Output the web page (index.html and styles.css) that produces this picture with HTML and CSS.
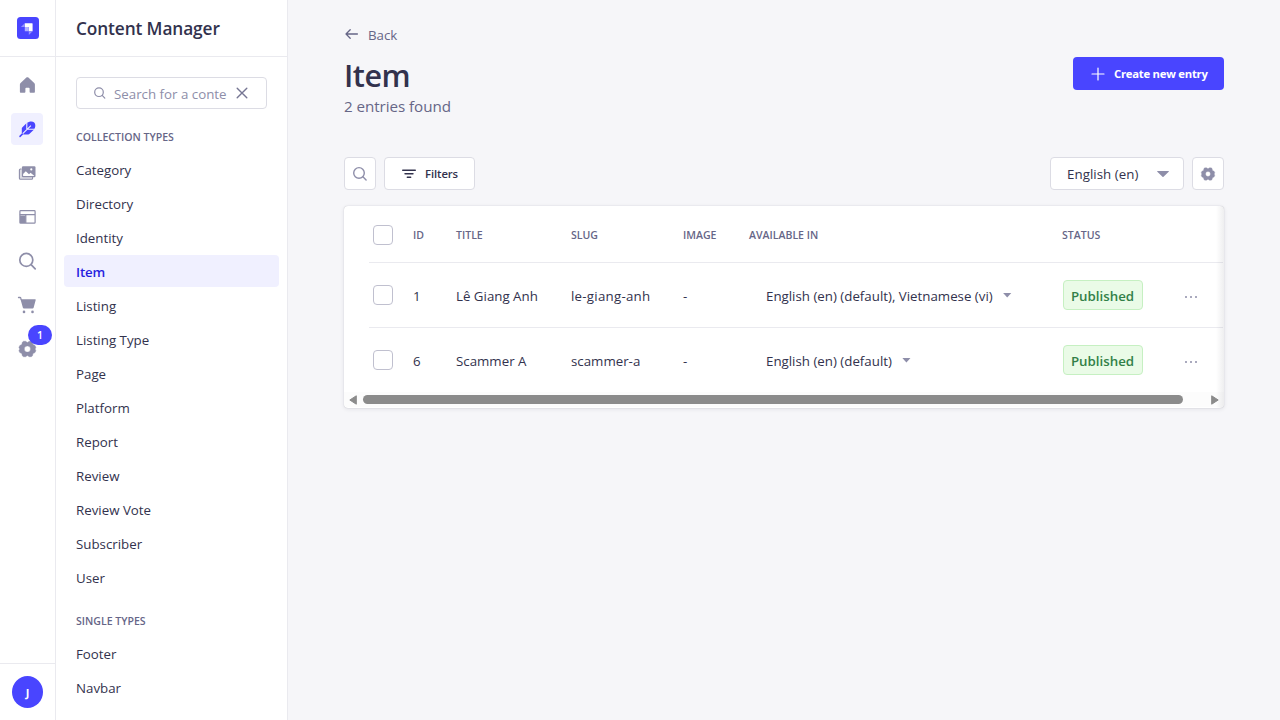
FILE: index.html
```html
<!DOCTYPE html>
<html lang="en">
<head>
<meta charset="utf-8">
<title>Content Manager</title>
<link rel="stylesheet" href="styles.css">
</head>
<body>
<div class="app">
  <nav class="rail">
    <div class="rail-logo">
      <svg width="22" height="22" viewBox="0 0 22 22"><rect width="22" height="22" rx="3.500" fill="#4945ff"/><path d="M7.800 6.200h7.300a.5.500 0 0 1 .5.500v7.600h-3.800v-3.800a.4.400 0 0 0-.4-.400H7.800z" fill="#fff"/><path d="M7.800 6.200v3.900H4.300c-.3 0-.4-.2-.2-.4zM11.800 14.300h3.800l-3.500 3.500c-.1.100-.3 0-.3-.2z" fill="#9593ff"/><path d="M7.800 10.100h3.600a.4.400 0 0 1 .4.400v3.800H8.200a.4.400 0 0 1-.4-.4z" fill="#b3b1ff"/></svg>
    </div>
    <div class="rail-links">
      <a class="rail-link"><svg width="20" height="20" viewBox="0 0 20 20"><path d="M10.400 2.200c.4 0 .7.100 1 .4l5.800 5.300c.5.400.7.900.7 1.500v7.300c0 .6-.4 1-1 1h-3.500c-.5 0-.8-.4-.8-.9v-3.300c0-.5-.3-.8-.8-.8H9.200c-.5 0-.8.300-.8.800v3.300c0 .5-.3.900-.8.900H3.900c-.6 0-1-.4-1-1V9.400c0-.6.200-1.100.7-1.500l5.800-5.300c.3-.3.600-.4 1-.4z" fill="#8e8ea9"/></svg></a>
      <a class="rail-link active"><svg width="20" height="20" viewBox="0 0 20 20"><path d="M4.800 14V9.400c0-.4.100-.6.400-.9l4.500-4.400c2.500-2.100 5.900-2.200 7.500-.7 1.700 1.800 1.500 5-.4 7.300l-4.500 4.300c-.3.300-.5.400-.9.400H6.600z" fill="#4945ff"/><path d="M3 17.400l3-3" stroke="#4945ff" stroke-width="1.500" stroke-linecap="round"/><path d="M5.700 14.700l8.200-8M9.800 3.500v6.500M10.300 10.200h7.500" fill="none" stroke="#f0f0ff" stroke-width="1.100"/></svg></a>
      <a class="rail-link"><svg width="20" height="20" viewBox="0 0 20 20"><path d="M4.600 6H3.400c-.6 0-1 .4-1 1v8.300c0 .6.400 1 1 1h11.200c.6 0 1-.4 1-1v-1.200" fill="#dcdce4" stroke="#8e8ea9" stroke-width="1.100"/><rect x="4.900" y="3.200" width="13.600" height="11" rx="1.200" fill="#8e8ea9"/><path d="M6.100 12.900V11l2.700-2.800 3.200 3 1.500-1.400 3.700 2.900v.2z" fill="#fff"/><circle cx="14.300" cy="6.400" r="1.100" fill="#fff"/></svg></a>
      <a class="rail-link"><svg width="20" height="20" viewBox="0 0 20 20"><rect x="2.900" y="3.600" width="15.200" height="12.600" rx=".8" fill="#fff" stroke="#8e8ea9" stroke-width="1.200"/><path d="M2.800 7.600h15.200M8.800 7.600v8.500" stroke="#8e8ea9" stroke-width="1.200"/><path d="M3 8.500h5.600V16H3z" fill="#8e8ea9"/></svg></a>
      <a class="rail-link"><svg width="20" height="20" viewBox="0 0 20 20" fill="none" stroke="#8e8ea9" stroke-width="1.700" stroke-linecap="round"><circle cx="9.300" cy="8.900" r="6.500"/><path d="M14.100 13.700l4.100 4.100"/></svg></a>
      <a class="rail-link"><svg width="20" height="20" viewBox="0 0 20 20"><path d="M1.500 2.500h1.400c.5 0 .8.200.9.700l.4 1.300" fill="none" stroke="#8e8ea9" stroke-width="1.300" stroke-linecap="round"/><path d="M3.500 4.200h14.700c.4 0 .6.300.5.700l-2.100 7.900c-.1.500-.5.800-1 .8H6.900c-.5 0-.9-.3-1-.8z" fill="#8e8ea9"/><circle cx="7" cy="16.900" r="1.300" fill="#8e8ea9"/><circle cx="15.500" cy="16.900" r="1.300" fill="#8e8ea9"/></svg></a>
      <a class="rail-link"><svg width="20" height="20" viewBox="-.4 0 20 20"><path fill-rule="evenodd" d="M6.100 2.300h2.100L10 3.500l1.800-1.200h2.100l1.200.9.500 2.300 2 1 .9 1.900-.8 1.600.8 1.700-.9 1.900-2 1-.5 2.200-1.200.9h-2.100L10 16.500l-1.800 1.200H6.100l-1.200-.9-.5-2.200-2-1-.9-1.900.8-1.700-.8-1.600.9-1.900 2-1 .5-2.300zM10 6.900a3.100 3.100 0 1 0 0 6.200 3.100 3.100 0 0 0 0-6.200z" fill="#8e8ea9" stroke="#8e8ea9" stroke-width=".4" stroke-linejoin="round"/></svg><span class="badge">1</span></a>
    </div>
    <div class="rail-user"><span class="avatar">J</span></div>
  </nav>

  <aside class="side">
    <header class="side-head">Content Manager</header>
    <div class="side-body">
      <div class="search">
        <svg width="14" height="14" viewBox="0 0 14 14" fill="none" stroke="#8e8ea9" stroke-width="1.200" stroke-linecap="round"><circle cx="6" cy="6.200" r="4.300"/><path d="M9.200 9.400l2.600 2.700"/></svg>
        <span class="search-text">Search for a conte</span>
        <svg width="12" height="12" viewBox="0 0 12 12" fill="none" stroke="#767693" stroke-width="1.400" stroke-linecap="round"><path d="M1.200 1.200l9.600 9.600M10.800 1.200l-9.600 9.600"/></svg>
      </div>
      <h2 class="group">COLLECTION TYPES</h2>
      <ul class="links">
        <li>Category</li><li>Directory</li><li>Identity</li><li class="current">Item</li><li>Listing</li><li>Listing Type</li><li>Page</li><li>Platform</li><li>Report</li><li>Review</li><li>Review Vote</li><li>Subscriber</li><li>User</li>
      </ul>
      <h2 class="group group-next">SINGLE TYPES</h2>
      <ul class="links"><li>Footer</li><li>Navbar</li></ul>
    </div>
  </aside>

  <main class="main">
    <a class="back"><svg width="16" height="16" viewBox="0 0 16 16" fill="none" stroke="#666687" stroke-width="1.300" stroke-linecap="round" stroke-linejoin="round"><path d="M13.400 8H2M6.200 3.800L2 8l4.200 4.200"/></svg><span>Back</span></a>
    <div class="title-row">
      <div><h1 class="title">Item</h1><p class="subtitle">2 entries found</p></div>
      <button class="create"><svg width="14" height="14" viewBox="0 0 14 14" stroke="#fff" stroke-width="1.200" stroke-linecap="round"><path d="M7 1v12M1 7h12"/></svg><span>Create new entry</span></button>
    </div>
    <div class="tools">
      <button class="box square"><svg width="16" height="16" viewBox="0 0 16 16" fill="none" stroke="#8e8ea9" stroke-width="1.400" stroke-linecap="round"><circle cx="7" cy="6.900" r="5.300"/><path d="M10.900 10.800l3.200 3.200"/></svg></button>
      <button class="box filters"><svg width="16" height="16" viewBox="0 0 16 16" stroke="#32324d" stroke-width="1.400" stroke-linecap="round"><path d="M1.700 4.300h12.600M4 7.800h8M6.300 11.200h3.400"/></svg><span>Filters</span></button>
      <div class="box locale"><span>English (en)</span><svg width="12" height="6" viewBox="0 0 12 6"><path d="M.5 0h11c.4 0 .5.400.2.700L6.500 5.700c-.3.300-.7.300-1 0L.3.700C0 .4.100 0 .5 0z" fill="#8e8ea9"/></svg></div>
      <button class="box square"><svg width="16" height="16" viewBox="0 0 20 20"><path fill-rule="evenodd" d="M6.100 2.300h2.100L10 3.500l1.800-1.200h2.100l1.200.9.500 2.300 2 1 .9 1.900-.8 1.600.8 1.700-.9 1.900-2 1-.5 2.200-1.200.9h-2.100L10 16.500l-1.800 1.200H6.100l-1.200-.9-.5-2.200-2-1-.9-1.900.8-1.700-.8-1.600.9-1.900 2-1 .5-2.300zM10 6.900a3.100 3.100 0 1 0 0 6.200 3.100 3.100 0 0 0 0-6.200z" fill="#8e8ea9" stroke="#8e8ea9" stroke-width=".4" stroke-linejoin="round"/></svg></button>
    </div>
    <section class="table">
      <div class="row head"><span class="check"></span><span>ID</span><span>TITLE</span><span>SLUG</span><span>IMAGE</span><span>AVAILABLE IN</span><span>STATUS</span><span></span></div>
      <div class="row"><span class="check"></span><span>1</span><span>Lê Giang Anh</span><span class="slug">le-giang-anh</span><span>-</span><span class="locales"><span>English (en) (default), Vietnamese (vi)</span><i class="caret"></i></span><span class="status">Published</span><span class="dots"><i></i><i></i><i></i></span></div>
      <div class="row"><span class="check"></span><span>6</span><span>Scammer A</span><span>scammer-a</span><span>-</span><span class="locales"><span>English (en) (default)</span><i class="caret"></i></span><span class="status">Published</span><span class="dots"><i></i><i></i><i></i></span></div>
      <div class="scroll">
        <svg width="8" height="10" viewBox="0 0 8 10"><path d="M7.300.8v8.400L.8 5z" fill="#8b8b8b" stroke="#8b8b8b" stroke-linejoin="round"/></svg>
        <span class="thumb"></span>
        <svg width="8" height="10" viewBox="0 0 8 10"><path d="M.7.8v8.400L7.200 5z" fill="#8b8b8b" stroke="#8b8b8b" stroke-linejoin="round"/></svg>
      </div>
    </section>
  </main>
</div>
</body>
</html>
```
FILE: styles.css
```css
* { box-sizing: border-box; }
body { margin: 0; font-family: "Open Sans", "Noto Sans", sans-serif; font-size: 13.3px; color: #32324d; }
h1, h2, p, ul { margin: 0; padding: 0; }
ul { list-style: none; }
button { font: inherit; color: inherit; margin: 0; padding: 0; }
svg { display: block; flex: none; }
.app { display: flex; width: 1280px; height: 720px; overflow: hidden; background: #f6f6f9; white-space: nowrap; }

.rail { width: 56px; flex: none; background: #fff; border-right: 1px solid #eaeaef; display: flex; flex-direction: column; }
.rail-logo { height: 57px; padding: 17px 0 0 17px; border-bottom: 1px solid #eaeaef; }
.rail-links { flex: 1; display: flex; flex-direction: column; gap: 12px; padding: 12px 0 12px 11px; }
.rail-link { position: relative; width: 32px; height: 32px; border-radius: 4px; display: flex; align-items: center; justify-content: center; }
.rail-link.active { background: #f0f0ff; }
.badge { position: absolute; left: 17px; top: -8px; width: 24px; height: 20px; border-radius: 10px; background: #4945ff; color: #fff; font-size: 10.5px; font-weight: 600; line-height: 21px; text-align: center; }
.rail-user { height: 57px; border-top: 1px solid #eaeaef; padding: 12px; }
.avatar { display: block; width: 31px; height: 32px; border-radius: 50%; background: #4945ff; color: #fff; font-size: 11px; font-weight: 700; line-height: 33px; text-align: center; }

.side { width: 232px; flex: none; background: #fff; border-right: 1px solid #eaeaef; }
.side-head { height: 57px; border-bottom: 1px solid #eaeaef; padding-left: 20px; font-size: 17.3px; letter-spacing: -.12px; font-weight: 600; line-height: 57px; }
.side-body { padding: 20px 8px 0; }
.search { width: 191px; height: 32px; margin-left: 12px; padding: 0 18px 0 16px; border: 1px solid #dcdce4; border-radius: 4px; display: flex; align-items: center; }
.search-text { flex: 1; margin-left: 7px; color: #8e8ea9; line-height: 32px; padding-top: 2px; }
.group { margin: 18px 0 6px 12px; font-size: 10.55px; font-weight: 600; line-height: 20px; color: #666687; }
.group-next { margin-top: 18px; }
.links { display: flex; flex-direction: column; gap: 2px; }
.links li { height: 32px; padding-left: 12px; border-radius: 4px; line-height: 34px; }
.links .current { background: #f0f0ff; color: #271fe0; font-weight: 600; letter-spacing: -.15px; }

.main { flex: 1; padding: 24px 56px 0; }
.back { display: flex; align-items: center; gap: 8px; height: 20px; color: #666687; }
.back span { padding-top: 2px; }
.title-row { display: flex; justify-content: space-between; height: 113px; padding-top: 13px; }
.title { font-size: 30.5px; letter-spacing: -.45px; font-weight: 600; line-height: 36px; padding-bottom: 2px; }
.subtitle { font-size: 15.2px; letter-spacing: -.06px; line-height: 22px; color: #666687; }
.create { width: 151px; height: 33px; border: 0; border-radius: 4px; background: #4945ff; color: #fff; font-size: 11.3px; letter-spacing: -.25px; font-weight: 700; display: flex; align-items: center; padding-left: 18px; gap: 9px; }
.tools { display: flex; gap: 8px; height: 33px; }
.box { height: 33px; border: 1px solid #dcdce4; border-radius: 4px; background: #fff; display: flex; align-items: center; }
.square { width: 32px; justify-content: center; }
.filters { width: 91px; padding-left: 16px; gap: 8px; font-size: 11.3px; letter-spacing: -.1px; font-weight: 600; }
.locale { width: 134px; margin-left: auto; padding: 0 14px 0 16px; justify-content: space-between; letter-spacing: .05px; }

.table { position: relative; margin-top: 16px; height: 202px; padding-left: 25px; background: #fff; border-radius: 4px; box-shadow: 0 1px 4px rgba(33, 33, 52, .1), 0 0 1px rgba(33, 33, 52, .25); }
.table::after { content: ""; position: absolute; right: 0; top: 0; width: 8px; height: 100%; border-radius: 0 4px 4px 0; background: linear-gradient(to left, rgba(33, 33, 52, .075), rgba(33, 33, 52, 0)); }
.row { height: 65px; display: grid; grid-template-columns: 44px 43px 115px 112px 66px 313px 121px 1fr; align-items: center; border-bottom: 1px solid #eaeaef; padding-top: 2px; margin-right: 1px; }
.row:nth-child(3) { border-bottom: 0; height: 64px; }
.head { height: 57px; font-size: 10.55px; font-weight: 600; color: #666687; }
.check { width: 20px; height: 20px; margin: -2px 0 0 4px; border: 1px solid #c0c0cf; border-radius: 4px; }
.head .check { margin-top: -1px; }
.slug { letter-spacing: .25px; }
.locales { display: flex; align-items: center; gap: 10px; padding-left: 17px; }
.caret { width: 9px; height: 5px; margin-top: -2px; background: #8e8ea9; clip-path: polygon(0 0, 100% 0, 50% 100%); }
.status { width: 80px; height: 30px; margin: -2px 0 0 .5px; border: 1px solid #c6f0c2; border-radius: 4px; background: #eafbe7; color: #328048; font-size: 13.3px; font-weight: 600; line-height: 31px; text-align: center; }
.dots { display: flex; gap: 3px; padding-left: 2px; margin-top: 1px; }
.dots i { width: 2px; height: 2px; border-radius: 50%; background: #8e8ea9; }
.scroll { height: 15px; margin-left: -25px; padding: 0 5px; background: #fcfcfc; display: flex; align-items: center; border-radius: 0 0 4px 4px; }
.thumb { width: 820px; height: 9px; border-radius: 5px; background: #8b8b8b; margin: 0 auto 0 6px; }
```
